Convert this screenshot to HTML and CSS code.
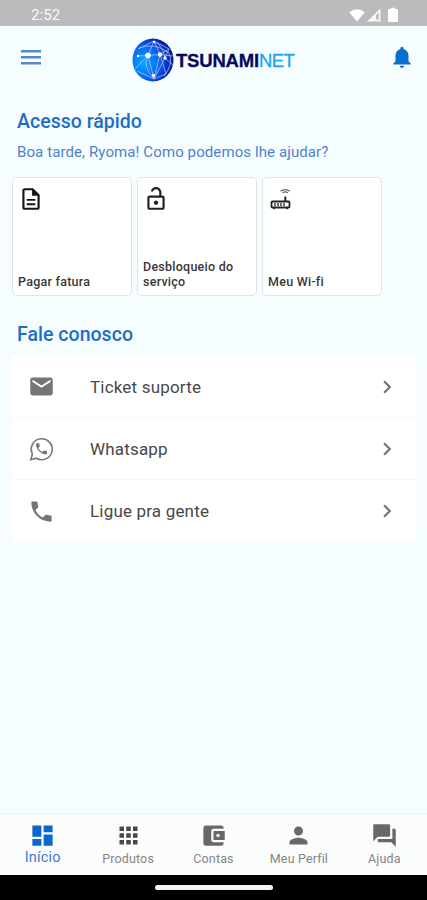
FILE: index.html
```html
<!DOCTYPE html>
<html lang="pt-BR">
<head>
<meta charset="utf-8">
<meta name="viewport" content="width=device-width">
<title>TsunamiNet</title>
<link rel="stylesheet" href="styles.css">
</head>
<body>
<div class="app">
  <div class="status">
    <span class="clock">2:52</span>
    <svg class="signals" width="52" height="18" viewBox="0 0 52 18" fill="#fff">
      <path d="M1.2 5.2Q9 -.8 16.800 5.200L9 14.500Z"/>
      <path fill-rule="evenodd" d="M32.500 1.500V14.500H19ZM30.800 5.500L28 8.300V12.500H30.800Z" opacity=".9"/>
      <path d="M41 2h2V.8h4V2h2q1 0 1 1v11q0 1-1 1h-8q-1 0-1-1V3q0-1 1-1Z"/>
    </svg>
  </div>
  <header class="header">
    <svg class="menu" width="20" height="15" viewBox="0 0 20 15" fill="#5489c7"><path d="M0 0h20v2.500H0zM0 6h20v2.500H0zM0 12h20v2.500H0z"/></svg>
    <div class="logo">
      <svg width="42" height="44" viewBox="0 0 42 44">
        <defs>
          <radialGradient id="globe" cx=".28" cy=".56" r=".78"><stop offset="0" stop-color="#08a8fa"/><stop offset=".42" stop-color="#0870f6"/><stop offset=".78" stop-color="#0828b8"/><stop offset="1" stop-color="#050a68"/></radialGradient>
          <clipPath id="disc"><ellipse cx="21" cy="22" rx="20.500" ry="21.500"/></clipPath>
        </defs>
        <ellipse cx="21" cy="22" rx="20.500" ry="21.500" fill="url(#globe)"/>
        <g clip-path="url(#disc)" fill="none" stroke="#a9c6ff" stroke-width=".9" opacity=".85">
          <path d="M5 18L16 17.500L28 16.500L41 18M16 17.500L22 3L28 16.500L22 41L16 17.500L3 31M22 3L6 11M22 3L37 11L28 16.500L34 36L22 41L5 33M33 20L22 41M33 20L37 11M16 17.500Q10 28 22 41M7 10Q23 4 37 15Q42 26 32 38M22 3Q31 8 33 20L41 27"/>
        </g>
        <g fill="#fff"><circle cx="16" cy="17.500" r="2.800"/><circle cx="28" cy="16.500" r="2.200"/><circle cx="33" cy="20" r="1.700"/><circle cx="21.500" cy="37.500" r="1.700"/><circle cx="6" cy="18" r="1.200"/><circle cx="22" cy="4" r="1.200"/></g>
      </svg>
      <span class="brand"><b>TSUNAMI</b><span class="net">NET</span></span>
    </div>
    <svg class="bell" width="26" height="26" viewBox="0 0 24 24" fill="#0a6fcb"><path d="M12 22c1.100 0 2-.9 2-2h-4c0 1.100.9 2 2 2zm6-6v-5c0-3.070-1.640-5.640-4.500-6.320V4c0-.83-.67-1.500-1.500-1.500s-1.500.67-1.500 1.500v.68C7.630 5.360 6 7.920 6 11v5l-2 2v1h16v-1l-2-2z"/></svg>
  </header>
  <main class="main">
    <h1 class="title quick">Acesso rápido</h1>
    <p class="greeting">Boa tarde, Ryoma! Como podemos lhe ajudar?</p>
    <div class="cards">
      <div class="card">
        <svg width="26" height="26" viewBox="0 0 24 24" fill="#161616"><path d="M8 16h8v1.700H8zm0-4h8v1.700H8zm6-10H6c-1.100 0-2 .9-2 2v16c0 1.100.89 2 1.990 2H18c1.100 0 2-.9 2-2V8l-6-6zm4 18H6V4h7v5h5v11z"/></svg>
        <span class="pay">Pagar fatura</span>
      </div>
      <div class="card">
        <svg width="26" height="26" viewBox="0 0 24 24" fill="#222"><path d="M18 8.800h-1V6c0-2.760-2.240-5-5-5-2.280 0-4.270 1.540-4.840 3.750l1.940.49C9.440 3.930 10.630 3 12 3c1.650 0 3 1.350 3 3v2.800H6c-1.100 0-2 .9-2 2V20c0 1.100.9 2 2 2h12c1.100 0 2-.9 2-2v-9.200c0-1.100-.9-2-2-2zM18 20H6v-9.200h12V20zm-6-2.600c1.100 0 2-.9 2-2s-.9-2-2-2-2 .9-2 2 .9 2 2 2z"/></svg>
        <span class="unlock">Desbloqueio do<br>serviço</span>
      </div>
      <div class="card">
        <svg width="26" height="26" viewBox="0 0 26 26" fill="none" stroke="#222"><rect x="3.500" y="15.500" width="18" height="6" rx="1" stroke-width="1.800"/><path d="M17.300 10.500V15" stroke-width="2"/><path d="M7 17v3M10 17v3M13 17v3M16 17v3" stroke-width="1.300"/><path d="M12.500 5.300Q17.300 1.900 22 5.300M14.500 6.900Q17.300 4.900 20 6.900" stroke="#666" stroke-width="1.100"/><path d="M5 22.700h2M18 22.700h2"/></svg>
        <span class="wifi">Meu Wi-fi</span>
      </div>
    </div>
    <h2 class="title contact">Fale conosco</h2>
    <div class="list">
      <div class="row">
        <svg class="ico" width="27" height="27" viewBox="0 0 24 24"><path d="M20 4H4c-1.100 0-2 .9-2 2v12c0 1.100.9 2 2 2h16c1.100 0 2-.9 2-2V6c0-1.100-.9-2-2-2zm0 4l-8 5-8-5V6l8 5 8-5v2z"/></svg>
        <span class="label ticket">Ticket suporte</span>
        <svg class="chev" width="26" height="26" viewBox="0 0 24 24"><path d="M10 6L8.590 7.410 13.170 12l-4.580 4.590L10 18l6-6z"/></svg>
      </div>
      <div class="row">
        <svg class="ico wa" width="27" height="27" viewBox="0 0 27 27"><path d="M2.800 24.700L4.400 19A10.500 10.500 0 1 1 8.300 23.200Z" fill="none" stroke="#777" stroke-width="1.600"/><path transform="translate(6.200 6.500) scale(.61)" d="M6.620 10.790c1.440 2.830 3.760 5.140 6.590 6.590l2.200-2.200c.27-.27.67-.36 1.020-.24 1.120.37 2.330.57 3.570.57.550 0 1 .45 1 1V20c0 .55-.45 1-1 1-9.390 0-17-7.610-17-17 0-.55.450-1 1-1h3.500c.55 0 1 .45 1 1 0 1.250.2 2.450.57 3.570.11.35.03.74-.25 1.020l-2.200 2.200z"/></svg>
        <span class="label whats">Whatsapp</span>
        <svg class="chev" width="26" height="26" viewBox="0 0 24 24"><path d="M10 6L8.590 7.410 13.170 12l-4.580 4.590L10 18l6-6z"/></svg>
      </div>
      <div class="row">
        <svg class="ico" width="27" height="27" viewBox="0 0 24 24"><path d="M6.620 10.790c1.440 2.830 3.760 5.140 6.590 6.590l2.200-2.200c.27-.27.67-.36 1.020-.24 1.120.37 2.330.57 3.570.57.550 0 1 .45 1 1V20c0 .55-.45 1-1 1-9.390 0-17-7.610-17-17 0-.55.450-1 1-1h3.500c.55 0 1 .45 1 1 0 1.250.2 2.450.57 3.570.11.35.03.74-.25 1.020l-2.200 2.200z"/></svg>
        <span class="label call">Ligue pra gente</span>
        <svg class="chev" width="26" height="26" viewBox="0 0 24 24"><path d="M10 6L8.590 7.410 13.170 12l-4.580 4.590L10 18l6-6z"/></svg>
      </div>
    </div>
  </main>
  <nav class="nav">
    <div class="tab active"><svg width="27" height="27" viewBox="0 0 24 24"><path d="M3 13h8V3H3v10zm0 8h8v-6H3v6zm10 0h8V11h-8v10zm0-18v6h8V3h-8z"/></svg><span>Início</span></div>
    <div class="tab grid"><svg width="27" height="27" viewBox="0 0 24 24"><path d="M4 8h4V4H4zm6 12h4v-4h-4zm-6 0h4v-4H4zm0-6h4v-4H4zm6 0h4v-4h-4zm6-10v4h4V4zm-6 4h4V4h-4zm6 6h4v-4h-4zm0 6h4v-4h-4z"/></svg><span>Produtos</span></div>
    <div class="tab"><svg width="27" height="27" viewBox="0 0 24 24"><path d="M21 18v1c0 1.100-.9 2-2 2H5c-1.110 0-2-.9-2-2V5c0-1.100.89-2 2-2h14c1.100 0 2 .9 2 2v1h-9c-1.110 0-2 .9-2 2v8c0 1.100.89 2 2 2h9zm-9-2h10V8H12v8zm4-2.500c-.83 0-1.500-.67-1.500-1.500s.67-1.500 1.500-1.500 1.500.67 1.500 1.500-.67 1.500-1.500 1.500z"/></svg><span>Contas</span></div>
    <div class="tab"><svg width="27" height="27" viewBox="0 0 24 24"><path d="M12 12c2.210 0 4-1.790 4-4s-1.790-4-4-4-4 1.790-4 4 1.790 4 4 4zm0 2c-2.670 0-8 1.340-8 4v2h16v-2c0-2.660-5.330-4-8-4z"/></svg><span>Meu Perfil</span></div>
    <div class="tab"><svg width="27" height="27" viewBox="0 0 24 24"><path d="M21 6h-2v9H6v2c0 .55.450 1 1 1h11l4 4V7c0-.55-.45-1-1-1zm-4 6V3c0-.55-.45-1-1-1H3c-.55 0-1 .45-1 1v14l4-4h10c.55 0 1-.45 1-1z"/></svg><span>Ajuda</span></div>
  </nav>
  <div class="system"><div class="pill"></div></div>
</div>
</body>
</html>
```
FILE: styles.css
```css
* { box-sizing: border-box; }
body { margin: 0; font-family: Roboto, sans-serif; background: #f6fdfe; }
svg { display: block; flex: none; }
.app { width: 427px; height: 900px; display: flex; flex-direction: column; overflow: hidden; background: #f6fdfe; }
.status { height: 26px; flex: none; background: #babbbc; display: flex; justify-content: space-between; padding: 5px 27px 0 31px; }
.clock { color: #fafafa; font-size: 15px; line-height: 20px; letter-spacing: .05px; }
.signals { margin-top: 2px; }
.header { height: 67px; flex: none; display: flex; align-items: flex-start; padding: 0 12.5px 0 21px; }
.menu { margin-top: 24px; }
.logo { display: flex; margin: 12px auto 0 91px; }
.brand { display: flex; font-family: "Liberation Sans", sans-serif; font-size: 18.5px; line-height: 22px; margin: 12px 0 0 2px; color: #08085e; letter-spacing: -.2px; }
.brand b { -webkit-text-stroke: .3px #08085e; }
.net { color: #20a4ea; -webkit-text-stroke: .3px #20a4ea; letter-spacing: -.5px; }
.bell { margin-top: 18px; }
.main { flex: 1; }
.title { margin: 0 0 0 17px; font-size: 19.5px; line-height: 24px; font-weight: 500; color: #1f6dc5; letter-spacing: .03px; }
.quick { margin-top: 17px; }
.greeting { margin: 8px 0 0 17px; font-size: 15px; line-height: 20px; color: #4d83ce; letter-spacing: .1px; white-space: nowrap; }
.cards { display: flex; gap: 5px; margin: 15px 0 0 11.5px; }
.card { width: 120px; height: 119px; border: 1px solid #e1e3e4; border-radius: 5px; background: #fff; display: flex; flex-direction: column; justify-content: space-between; padding: 8px 6px 6px 5.500px; font-size: 12.5px; line-height: 15px; font-weight: 500; color: #383838; }
.card span { white-space: nowrap; letter-spacing: .25px; }
.contact { margin-top: 27px; }
.list { margin: 9px 10px 0 12px; background: #fff; }
.row { height: 62px; display: flex; align-items: center; padding: 0 17px 0 16px; border-bottom: 1px solid #f4f6f8; }
.row:last-child { border-bottom: 0; }
.ico, .chev { fill: #757575; }
.label { flex: 1; margin-left: 35px; font-size: 17px; line-height: 24px; color: #484848; letter-spacing: .18px; }
.nav { height: 62px; flex: none; background: #fbfcfc; border-top: 1px solid #eef1f1; display: flex; padding-top: 8px; }
.tab { flex: 1; display: flex; flex-direction: column; align-items: center; font-size: 12.5px; line-height: 16px; color: #858585; letter-spacing: .15px; }
.tab svg { fill: #686868; }
.tab.grid svg { fill: #484848; }
.tab span { margin-top: 2px; }
.tab.active { color: #3b7ccc; font-size: 14.5px; }
.tab.active svg { fill: #0b68c8; }
.tab.active span { margin-top: 1px; }
.system { height: 25px; flex: none; background: #000; display: flex; justify-content: center; padding-top: 10px; }
.pill { width: 118px; height: 5px; border-radius: 3px; background: #f4f4f4; }
```
